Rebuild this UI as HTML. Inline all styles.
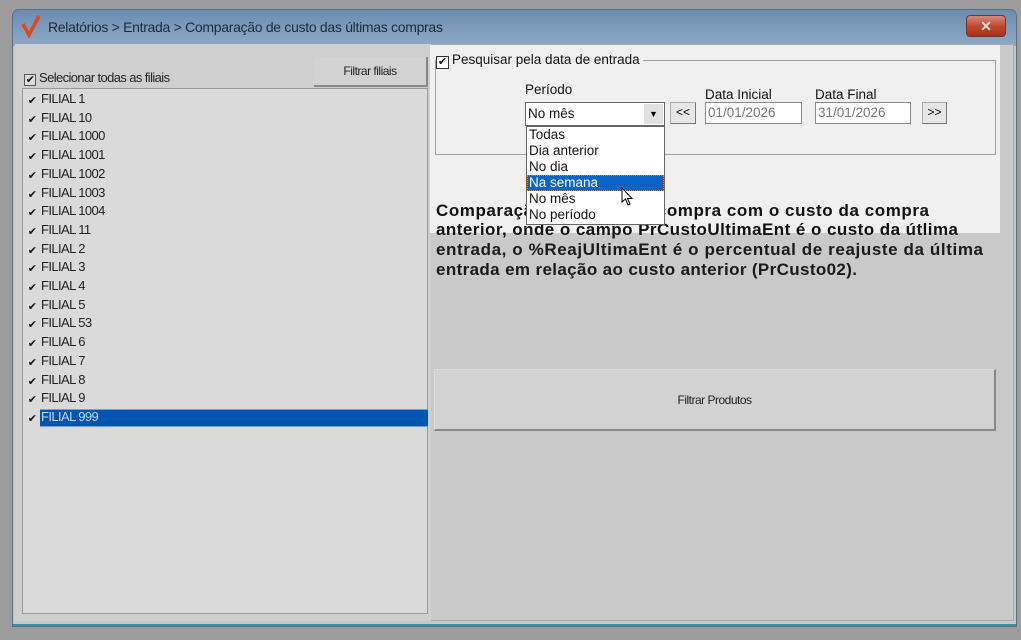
<!DOCTYPE html>
<html><head><meta charset="utf-8"><style>
*{margin:0;padding:0;box-sizing:border-box}
body{width:1021px;height:640px;background:#9c9c9c;position:relative;overflow:hidden;font-family:"Liberation Sans",sans-serif;}
.abs{position:absolute}
.win{left:12px;top:9px;width:1005px;height:618px;border-radius:7px 7px 0 0;background:linear-gradient(#6c8cb0,#8ea9c6 36px,#c8c8c8 36px);border:1px solid #5a6e86;box-shadow:inset 0 -2px 0 #3f8ea0}
.title{left:48px;top:19px;font-size:14px;color:#1d2a3a;letter-spacing:-0.3px}
.close{left:966px;top:15px;width:40px;height:22px;border-radius:4px;background:linear-gradient(#d88a7a,#c04a30 50%,#a83018);border:1px solid #6a3a34;color:#ddd;font-size:14px;text-align:center;line-height:20px;font-weight:bold}
.client{left:15px;top:44px;width:999px;height:577px;background:#c9c9c9;border:1px solid #a8a8a8}
.leftp{left:15px;top:44px;width:416px;height:577px;background:#cfcfcf}
.list{left:22px;top:88px;width:406px;height:526px;background:#dadada;border:1px solid #999}
.item{position:absolute;left:3px;height:18px;font-size:13px;color:#222;line-height:18px;letter-spacing:-0.6px}
.cb{display:inline-block;width:12px;height:12px;font-size:11px;line-height:11px;text-align:center;vertical-align:-1px;margin-right:3px;color:#111}
.sel{position:absolute;left:17px;top:320px;width:388px;height:18px;background:#0055b0;border-top:1px solid #6ea0d8;border-bottom:1px solid #6ea0d8}
.btn{background:#d2d2d2;border-right:2px solid #888;border-bottom:2px solid #888;font-size:12px;color:#222;text-align:center;letter-spacing:-0.5px}
.hl{left:430px;top:45px;width:570px;height:188px;background:#f0f0f0}
.grp{left:435px;top:60px;width:561px;height:95px;border:1px solid #a0a0a0}
.t13{font-size:13.5px;color:#111}
.inp{background:#fff;border:1px solid #8a8a8a;font-size:13.5px;color:#777;padding-left:2px;line-height:19px}
.sbtn{background:#e6e6e6;border:1px solid #aaa;border-right-color:#777;border-bottom-color:#777;font-size:12px;text-align:center;line-height:19px}
.dd{left:526px;top:126px;width:139px;height:99px;background:#fff;border:1px solid #666}
.dd div{height:16px;font-size:13.5px;line-height:16px;padding-left:2px;color:#111}
</style></head><body>
<div class="abs win"></div>
<svg class="abs" style="left:20px;top:14px" width="22" height="24"><path d="M3 10 L9 21 L19 2" stroke="#e04818" stroke-width="3.5" fill="none"/></svg>
<div class="abs title">Relatórios &gt; Entrada &gt; Comparação de custo das últimas compras</div>
<div class="abs close">✕</div>
<div class="abs client"></div>
<div class="abs leftp"></div>
<div class="abs btn" style="left:314px;top:57px;width:114px;height:30px;line-height:29px">Filtrar filiais</div>
<div class="abs" style="left:24px;top:70px;font-size:13px;color:#222;letter-spacing:-0.6px"><span class="cb" style="border:1px solid #555;background:#ddd">✔</span>Selecionar todas as filiais</div>
<div class="abs list">
<div class="sel"></div>
<div class="item" style="top:1px"><span class="cb">✔</span>FILIAL 1</div>
<div class="item" style="top:19.7px"><span class="cb">✔</span>FILIAL 10</div>
<div class="item" style="top:38.4px"><span class="cb">✔</span>FILIAL 1000</div>
<div class="item" style="top:57.1px"><span class="cb">✔</span>FILIAL 1001</div>
<div class="item" style="top:75.8px"><span class="cb">✔</span>FILIAL 1002</div>
<div class="item" style="top:94.5px"><span class="cb">✔</span>FILIAL 1003</div>
<div class="item" style="top:113.2px"><span class="cb">✔</span>FILIAL 1004</div>
<div class="item" style="top:131.9px"><span class="cb">✔</span>FILIAL 11</div>
<div class="item" style="top:150.6px"><span class="cb">✔</span>FILIAL 2</div>
<div class="item" style="top:169.3px"><span class="cb">✔</span>FILIAL 3</div>
<div class="item" style="top:188px"><span class="cb">✔</span>FILIAL 4</div>
<div class="item" style="top:206.7px"><span class="cb">✔</span>FILIAL 5</div>
<div class="item" style="top:225.4px"><span class="cb">✔</span>FILIAL 53</div>
<div class="item" style="top:244.1px"><span class="cb">✔</span>FILIAL 6</div>
<div class="item" style="top:262.8px"><span class="cb">✔</span>FILIAL 7</div>
<div class="item" style="top:281.5px"><span class="cb">✔</span>FILIAL 8</div>
<div class="item" style="top:300.2px"><span class="cb">✔</span>FILIAL 9</div>
<div class="item" style="top:319px;color:#c8d8ee"><span class="cb">✔</span>FILIAL 999</div>
</div>
<div class="abs hl"></div>
<div class="abs grp"></div>
<div class="abs t13" style="left:436px;top:52px;background:#f0f0f0;padding-right:3px"><span class="cb" style="border:1px solid #333;background:#fff;width:13px;height:13px">✔</span>Pesquisar pela data de entrada</div>
<div class="abs t13" style="left:525px;top:82px">Período</div>
<div class="abs t13" style="left:705px;top:87px">Data Inicial</div>
<div class="abs t13" style="left:815px;top:87px">Data Final</div>
<div class="abs inp" style="left:525px;top:102px;width:140px;height:24px;color:#111;line-height:22px;border-color:#666">No mês</div>
<div class="abs" style="left:644px;top:104px;width:19px;height:20px;background:#e0e0e0;font-size:9px;text-align:center;line-height:20px">▼</div>
<div class="abs sbtn" style="left:670px;top:102px;width:26px;height:22px">&lt;&lt;</div>
<div class="abs inp" style="left:705px;top:102px;width:97px;height:22px">01/01/2026</div>
<div class="abs inp" style="left:815px;top:102px;width:96px;height:22px">31/01/2026</div>
<div class="abs sbtn" style="left:922px;top:102px;width:25px;height:22px">&gt;&gt;</div>
<svg class="abs" style="left:0;top:0" width="1021" height="300">
<g font-family="Liberation Sans, sans-serif" font-weight="bold" font-size="17" fill="#111">
<text x="436" y="216" textLength="493" lengthAdjust="spacing">Comparação do custo da compra com o custo da compra</text>
<text x="436" y="235" textLength="522" lengthAdjust="spacing">anterior, onde o campo PrCustoUltimaEnt é o custo da útlima</text>
<text x="436" y="255" textLength="547" lengthAdjust="spacing" fill="#1a1a1a">entrada, o %ReajUltimaEnt é o percentual de reajuste da última</text>
<text x="436" y="275" textLength="421" lengthAdjust="spacing" fill="#1a1a1a">entrada em relação ao custo anterior (PrCusto02).</text>
</g></svg>
<div class="abs dd">
<div>Todas</div><div>Dia anterior</div><div>No dia</div>
<div style="background:#0a64c8;color:#fff;outline:1px dotted #e08020;outline-offset:-1px">Na semana</div>
<div>No mês</div><div>No período</div>
</div>
<svg class="abs" style="left:621px;top:187px" width="14" height="20"><path d="M1 1 L1 15 L4.5 12 L7 18 L9 17 L6.5 11.5 L11 11.5 Z" fill="#fff" stroke="#000" stroke-width="1"/></svg>
<div class="abs btn" style="left:434px;top:369px;width:562px;height:62px;line-height:60px;border-top:1px solid #ddd;border-left:1px solid #ddd">Filtrar Produtos</div>
</body></html>
